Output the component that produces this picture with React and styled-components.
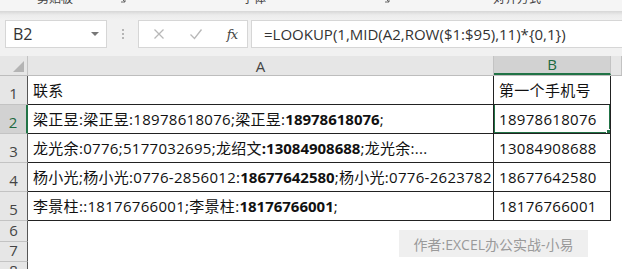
import React from 'react';
import styled, { createGlobalStyle } from 'styled-components';

const GlobalStyle = createGlobalStyle`
  html, body { margin: 0; padding: 0; background: #fff; }
  body { font-family: "Open Sans", "Noto Sans CJK SC", sans-serif; }
`;

const green = '#217346';
const cjk = '"Open Sans", "Noto Sans CJK SC", sans-serif';

const Page = styled.div`
  width: 622px;
  height: 269px;
  overflow: hidden;
  background: #f1f1f1;
`;

const Ribbon = styled.div`
  height: 11px;
  overflow: hidden;
  display: flex;
  background: #f5f5f5;
  font-family: ${cjk};
  font-size: 12px;
  line-height: 14px;
  color: #444;
`;

const RibbonLabel = styled.span`
  margin-top: -8px;
  margin-left: ${p => p.$left}px;
  white-space: nowrap;
`;

const Launcher = styled.svg`
  margin-top: -6px;
  margin-left: ${p => p.$left}px;
  flex: none;
`;

const Shade = styled.div`
  height: 9px;
  background: linear-gradient(#d6d6d6, #ececec 45%, #f1f1f1);
`;

const FormulaRow = styled.div`
  height: 28px;
  display: flex;
  align-items: stretch;
  padding-left: 5px;
`;

const Box = styled.div`
  background: #fff;
  border: 1px solid #d6d6d6;
  box-sizing: border-box;
  display: flex;
  align-items: center;
`;

const NameBox = styled(Box)`
  width: 102px;
  padding: 0 0 0 7px;
  justify-content: space-between;
  font-family: ${cjk};
  font-size: 16px;
  color: #333;
`;

const Caret = styled.span`
  width: 0;
  height: 0;
  margin-right: 7px;
  border-left: 4px solid transparent;
  border-right: 4px solid transparent;
  border-top: 4px solid #777;
`;

const Dots = styled.div`
  width: 31px;
  display: flex;
  flex-direction: column;
  align-items: center;
  justify-content: center;
  gap: 2px;
  span { width: 2px; height: 2px; background: #b5b5b5; }
`;

const Buttons = styled(Box)`
  width: 110px;
  padding: 0 10px 0 14px;
  justify-content: space-between;
`;

const Fx = styled.span`
  font-family: "DejaVu Serif", "Liberation Serif", serif;
  font-style: italic;
  font-size: 13px;
  color: #444;
  letter-spacing: -1px;
`;

const FormulaBox = styled(Box)`
  flex: 1;
  margin-left: 3px;
  border-right: none;
  padding-left: 12px;
  font-family: ${cjk};
  font-size: 15px;
  color: #333;
  white-space: nowrap;
`;

const Gap = styled.div`
  height: 8px;
`;

const Sheet = styled.div`
  background: #fff;
  font-family: ${cjk};
`;

const Row = styled.div`
  display: flex;
  height: ${p => p.$h}px;
`;

const HeaderRow = styled(Row)`
  background: #e6e6e6;
  border-bottom: 1px solid #bdbdbd;
  box-sizing: border-box;
`;

const Corner = styled.div`
  width: 28px;
  flex: none;
  border-right: 1px solid #c3c3c3;
  box-sizing: border-box;
  display: flex;
  align-items: flex-end;
  justify-content: flex-end;
  padding: 0 3px 3px 0;
`;

const ColHead = styled.div`
  width: ${p => p.$w}px;
  flex: none;
  box-sizing: border-box;
  display: flex;
  align-items: flex-end;
  justify-content: center;
  font-size: 15px;
  line-height: 18px;
  color: ${p => (p.$sel ? '#1e6a40' : '#444')};
  background: ${p => (p.$sel ? '#d2d2d2' : 'transparent')};
  border-right: 1px solid #c3c3c3;
  border-bottom: ${p => (p.$sel ? `2px solid ${green}` : 'none')};
`;

const RowHead = styled.div`
  width: 28px;
  flex: none;
  box-sizing: border-box;
  display: flex;
  align-items: flex-end;
  justify-content: center;
  font-size: 15px;
  line-height: 19px;
  padding-bottom: 1px;
  color: ${p => (p.$sel ? '#1e6a40' : '#444')};
  background: ${p => (p.$sel ? '#d2d2d2' : '#e6e6e6')};
  border-bottom: 1px solid #c3c3c3;
  border-right: ${p => (p.$sel ? `2px solid ${green}` : '1px solid #555')};
`;

const Cell = styled.div`
  position: relative;
  width: ${p => p.$w}px;
  flex: none;
  box-sizing: border-box;
  display: flex;
  align-items: flex-end;
  padding: 0 0 4px 5px;
  overflow: hidden;
  white-space: nowrap;
  font-size: 15px;
  letter-spacing: 0.3px;
  line-height: 20px;
  color: #111;
  border-right: ${p => (p.$bordered ? '1px solid #222' : 'none')};
  border-bottom: ${p => (p.$bordered ? '1px solid #222' : 'none')};
  b { font-weight: 700; letter-spacing: 0; }
`;

const Clip = styled.span`
  overflow: hidden;
  display: block;
  max-width: 100%;
`;

const Selection = styled.div`
  position: absolute;
  left: -1px;
  top: -2px;
  right: -1px;
  bottom: -1px;
  border: 2px solid ${green};
  pointer-events: none;
`;

const Handle = styled.div`
  position: absolute;
  right: -4px;
  bottom: -4px;
  width: 5px;
  height: 5px;
  background: ${green};
  border: 1px solid #fff;
`;

const Watermark = styled.div`
  position: absolute;
  left: 399px;
  top: 230px;
  width: 189px;
  height: 27px;
  background: #efefef;
  color: #9a9a9a;
  font-family: ${cjk};
  font-size: 14px;
  display: flex;
  align-items: center;
  justify-content: center;
`;

const Wrap = styled.div`
  position: relative;
`;

const rows = [
  { n: 1, h: 29, a: <>联系</>, b: '第一个手机号' },
  { n: 2, h: 29, a: <>梁正昱:梁正昱:18978618076;梁正昱:<b>18978618076</b>;</>, b: '18978618076', sel: true },
  { n: 3, h: 29, a: <>龙光余:0776;5177032695;龙绍文<b>:13084908688</b>;龙光余:...</>, b: '13084908688' },
  { n: 4, h: 29, a: <>杨小光;杨小光:0776-2856012:<b>18677642580</b>;杨小光:0776-2623782</>, b: '18677642580' },
  { n: 5, h: 29, a: <>李景柱::18176766001;李景柱:<b>18176766001</b>;</>, b: '18176766001' },
  { n: 6, h: 21 },
  { n: 7, h: 20 },
  { n: 8, h: 20 },
];

export default function App() {
  return (
    <Wrap>
      <GlobalStyle />
      <Page>
        <Ribbon>
          <RibbonLabel $left={37}>剪贴板</RibbonLabel>
          <Launcher $left={44} width="9" height="9" viewBox="0 0 9 9">
            <path d="M1 1h4M1 1v4M2 2l6 6M8 4v4H4" stroke="#666" fill="none" strokeWidth="1" />
          </Launcher>
          <RibbonLabel $left={116}>字体</RibbonLabel>
          <Launcher $left={115} width="9" height="9" viewBox="0 0 9 9">
            <path d="M1 1h4M1 1v4M2 2l6 6M8 4v4H4" stroke="#666" fill="none" strokeWidth="1" />
          </Launcher>
          <RibbonLabel $left={103}>对齐方式</RibbonLabel>
        </Ribbon>
        <Shade />
        <FormulaRow>
          <NameBox>B2<Caret /></NameBox>
          <Dots><span /><span /><span /></Dots>
          <Buttons>
            <svg width="12" height="12" viewBox="0 0 12 12">
              <path d="M1.5 1.5l9 9M10.5 1.5l-9 9" stroke="#b8b8b8" strokeWidth="1.3" />
            </svg>
            <svg width="14" height="12" viewBox="0 0 14 12">
              <path d="M1.5 6.5l4 4 7-9" stroke="#b8b8b8" strokeWidth="1.3" fill="none" />
            </svg>
            <Fx>fx</Fx>
          </Buttons>
          <FormulaBox>=LOOKUP(1,MID(A2,ROW($1:$95),11)*{'{'}0,1{'}'})</FormulaBox>
        </FormulaRow>
        <Gap />
        <Sheet>
          <HeaderRow $h={20}>
            <Corner>
              <svg width="11" height="11" viewBox="0 0 11 11">
                <path d="M11 0V11H0Z" fill="#b4b4b4" />
              </svg>
            </Corner>
            <ColHead $w={466}>A</ColHead>
            <ColHead $w={117} $sel>B</ColHead>
            <ColHead $w={11} />
          </HeaderRow>
          {rows.map(r => {
            const bordered = r.n <= 5;
            return (
              <Row key={r.n} $h={r.h}>
                <RowHead $sel={r.sel}>{r.n}</RowHead>
                <Cell $w={466} $bordered={bordered}><Clip>{r.a}</Clip></Cell>
                <Cell $w={117} $bordered={bordered}>
                  {r.b}
                  {r.sel && <Selection><Handle /></Selection>}
                </Cell>
                <Cell $w={11} />
              </Row>
            );
          })}
        </Sheet>
      </Page>
      <Watermark>作者:EXCEL办公实战-小易</Watermark>
    </Wrap>
  );
}
